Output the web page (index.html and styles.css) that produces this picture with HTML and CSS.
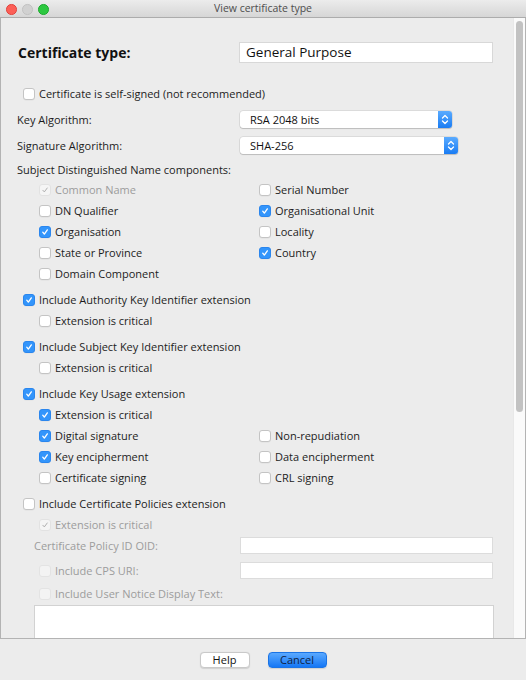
FILE: index.html
```html
<!DOCTYPE html>
<html>
<head>
<meta charset="utf-8">
<title>View certificate type</title>
<link rel="stylesheet" href="styles.css">
</head>
<body>
<div class="window">
  <div class="titlebar">
    <div class="lights">
      <span class="light red"></span>
      <span class="light gray"></span>
      <span class="light green"></span>
    </div>
    <div class="title">View certificate type</div>
  </div>

  <div class="pane">
    <div class="content">
      <div class="header-row">
        <div class="heading">Certificate type:</div>
        <div class="textfield big">General Purpose</div>
      </div>

      <div class="cbrow top gap-self">
        <span class="box"></span><span>Certificate is self-signed (not recommended)</span>
      </div>

      <div class="frow gap5">
        <div class="flabel">Key Algorithm:</div>
        <div class="select w212">
          <span class="select-text">RSA 2048 bits</span>
          <span class="stepper"><svg width="14" height="17" viewBox="0 0 14 17"><path d="M4.5 7 L7 4.5 L9.5 7 M4.5 10 L7 12.5 L9.5 10" fill="none" stroke="#fff" stroke-width="1.3" stroke-linecap="round" stroke-linejoin="round"/></svg></span>
        </div>
      </div>

      <div class="frow gap5">
        <div class="flabel">Signature Algorithm:</div>
        <div class="select w218">
          <span class="select-text">SHA-256</span>
          <span class="stepper"><svg width="14" height="17" viewBox="0 0 14 17"><path d="M4.5 7 L7 4.5 L9.5 7 M4.5 10 L7 12.5 L9.5 10" fill="none" stroke="#fff" stroke-width="1.3" stroke-linecap="round" stroke-linejoin="round"/></svg></span>
        </div>
      </div>

      <div class="sublabel">Subject Distinguished Name components:</div>

      <div class="cbgrid">
        <div class="cbrow disabled"><span class="box dis-checked"><svg width="12" height="12" viewBox="0 0 12 12"><path d="M3.4 6.3 L5.2 8.3 L8.7 3.6" fill="none" stroke="#a9a9a9" stroke-width="1.1" stroke-linecap="round" stroke-linejoin="round"/></svg></span><span>Common Name</span></div>
        <div class="cbrow"><span class="box"></span><span>Serial Number</span></div>
        <div class="cbrow"><span class="box"></span><span>DN Qualifier</span></div>
        <div class="cbrow"><span class="box checked"><svg width="12" height="12" viewBox="0 0 12 12"><path d="M3.3 6.2 L5.2 8.5 L8.8 3.4" fill="none" stroke="#fff" stroke-width="1.6" stroke-linecap="round" stroke-linejoin="round"/></svg></span><span>Organisational Unit</span></div>
        <div class="cbrow"><span class="box checked"><svg width="12" height="12" viewBox="0 0 12 12"><path d="M3.3 6.2 L5.2 8.5 L8.8 3.4" fill="none" stroke="#fff" stroke-width="1.6" stroke-linecap="round" stroke-linejoin="round"/></svg></span><span>Organisation</span></div>
        <div class="cbrow"><span class="box"></span><span>Locality</span></div>
        <div class="cbrow"><span class="box"></span><span>State or Province</span></div>
        <div class="cbrow"><span class="box checked"><svg width="12" height="12" viewBox="0 0 12 12"><path d="M3.3 6.2 L5.2 8.5 L8.8 3.4" fill="none" stroke="#fff" stroke-width="1.6" stroke-linecap="round" stroke-linejoin="round"/></svg></span><span>Country</span></div>
        <div class="cbrow"><span class="box"></span><span>Domain Component</span></div>
      </div>

      <div class="cbrow top gap5">
        <span class="box checked"><svg width="12" height="12" viewBox="0 0 12 12"><path d="M3.3 6.2 L5.2 8.5 L8.8 3.4" fill="none" stroke="#fff" stroke-width="1.6" stroke-linecap="round" stroke-linejoin="round"/></svg></span><span>Include Authority Key Identifier extension</span>
      </div>
      <div class="cbrow sub"><span class="box"></span><span>Extension is critical</span></div>

      <div class="cbrow top gap5">
        <span class="box checked"><svg width="12" height="12" viewBox="0 0 12 12"><path d="M3.3 6.2 L5.2 8.5 L8.8 3.4" fill="none" stroke="#fff" stroke-width="1.6" stroke-linecap="round" stroke-linejoin="round"/></svg></span><span>Include Subject Key Identifier extension</span>
      </div>
      <div class="cbrow sub"><span class="box"></span><span>Extension is critical</span></div>

      <div class="cbrow top gap5">
        <span class="box checked"><svg width="12" height="12" viewBox="0 0 12 12"><path d="M3.3 6.2 L5.2 8.5 L8.8 3.4" fill="none" stroke="#fff" stroke-width="1.6" stroke-linecap="round" stroke-linejoin="round"/></svg></span><span>Include Key Usage extension</span>
      </div>
      <div class="cbrow sub"><span class="box checked"><svg width="12" height="12" viewBox="0 0 12 12"><path d="M3.3 6.2 L5.2 8.5 L8.8 3.4" fill="none" stroke="#fff" stroke-width="1.6" stroke-linecap="round" stroke-linejoin="round"/></svg></span><span>Extension is critical</span></div>
      <div class="cbgrid">
        <div class="cbrow"><span class="box checked"><svg width="12" height="12" viewBox="0 0 12 12"><path d="M3.3 6.2 L5.2 8.5 L8.8 3.4" fill="none" stroke="#fff" stroke-width="1.6" stroke-linecap="round" stroke-linejoin="round"/></svg></span><span>Digital signature</span></div>
        <div class="cbrow"><span class="box"></span><span>Non-repudiation</span></div>
        <div class="cbrow"><span class="box checked"><svg width="12" height="12" viewBox="0 0 12 12"><path d="M3.3 6.2 L5.2 8.5 L8.8 3.4" fill="none" stroke="#fff" stroke-width="1.6" stroke-linecap="round" stroke-linejoin="round"/></svg></span><span>Key encipherment</span></div>
        <div class="cbrow"><span class="box"></span><span>Data encipherment</span></div>
        <div class="cbrow"><span class="box"></span><span>Certificate signing</span></div>
        <div class="cbrow"><span class="box"></span><span>CRL signing</span></div>
      </div>

      <div class="cbrow top gap5">
        <span class="box"></span><span>Include Certificate Policies extension</span>
      </div>
      <div class="cbrow sub disabled"><span class="box dis-checked"><svg width="12" height="12" viewBox="0 0 12 12"><path d="M3.4 6.3 L5.2 8.3 L8.7 3.6" fill="none" stroke="#a9a9a9" stroke-width="1.1" stroke-linecap="round" stroke-linejoin="round"/></svg></span><span>Extension is critical</span></div>

      <div class="prow">
        <div class="plabel">Certificate Policy ID OID:</div>
        <div class="field"></div>
      </div>
      <div class="prow gap4">
        <div class="cbrow sub disabled"><span class="box dis"></span><span>Include CPS URI:</span></div>
        <div class="field"></div>
      </div>
      <div class="cbrow sub disabled gap2"><span class="box dis"></span><span>Include User Notice Display Text:</span></div>
      <div class="textarea"></div>
    </div>
    <div class="scrollbar"><div class="thumb"></div></div>
  </div>

  <div class="footer">
    <button class="btn">Help</button>
    <button class="btn primary">Cancel</button>
  </div>
</div>
</body>
</html>
```

FILE: styles.css
```css
* { box-sizing: border-box; }

html, body {
  margin: 0;
  padding: 0;
  background: #ececec;
}

body {
  font-family: "Open Sans", "DejaVu Sans", sans-serif;
  font-size: 11px;
  color: #1c1c1c;
}

.window {
  width: 526px;
  height: 680px;
  display: flex;
  flex-direction: column;
  background: #ececec;
  overflow: hidden;
}

/* title bar */
.titlebar {
  height: 18px;
  flex: none;
  position: relative;
  background: linear-gradient(#ececec, #d6d6d6);
  border-bottom: 1px solid #acacac;
  display: flex;
  align-items: center;
  justify-content: center;
}

.lights {
  position: absolute;
  left: 6px;
  top: 4px;
  display: flex;
  gap: 5.5px;
}

.light {
  width: 10.5px;
  height: 10.5px;
  border-radius: 50%;
  display: block;
}
.light.red { background: #fc5f57; border: 0.5px solid #e0443e; }
.light.gray { background: #d1d1d1; border: 0.5px solid #c2c2c2; }
.light.green { background: #2cc840; border: 0.5px solid #1eaa30; }

.title {
  font-size: 10.5px;
  color: #4d4d4d;
  line-height: 17px;
}

/* scroll pane */
.pane {
  height: 621px;
  flex: none;
  display: flex;
  border-left: 1px solid #b3b3b3;
  border-right: 1px solid #b3b3b3;
  border-bottom: 1px solid #b3b3b3;
}

.content {
  flex: 1;
  overflow: hidden;
  padding: 24px 0 0 16px;
}

.scrollbar {
  width: 12px;
  flex: none;
  background: #fafafa;
  border-left: 1px solid #e8e8e8;
  padding: 3px 0 0 2px;
}

.thumb {
  width: 7px;
  height: 391px;
  border-radius: 4px;
  background: #c2c2c2;
}

/* header */
.header-row {
  display: flex;
  align-items: center;
  height: 20px;
}

.heading {
  width: 222px;
  padding-left: 1px;
  font-size: 14px;
  font-weight: bold;
  color: #111;
}

.textfield.big {
  width: 254px;
  height: 21px;
  background: #fff;
  border: 1px solid #d8d8d8;
  font-size: 13.5px;
  line-height: 19px;
  padding-left: 6px;
  color: #111;
}

/* rows */
.cbrow {
  height: 21px;
  display: flex;
  align-items: center;
  gap: 4px;
  white-space: nowrap;
}

.cbrow.top { padding-left: 6px; }
.cbrow.sub { padding-left: 22px; }
.cbrow.disabled { color: #9c9c9c; }

.gap-self { margin-top: 21px; }
.gap5 { margin-top: 5px; }
.gap4 { margin-top: 4px; }
.gap2 { margin-top: 2px; }

.box {
  width: 12px;
  height: 12px;
  flex: none;
  border-radius: 3px;
  background: #fff;
  border: 1px solid #c4c4c4;
  box-shadow: 0 0.5px 0.5px rgba(0,0,0,0.06);
  display: flex;
  align-items: center;
  justify-content: center;
}

.box svg { display: block; }

.box.checked {
  background: #3395fb;
  border-color: #2a86ee;
}

.box.dis-checked {
  background: #f5f5f5;
  border-color: #e2e2e2;
  box-shadow: none;
}

.box.dis {
  background: #f3f3f3;
  border-color: #e3e3e3;
  box-shadow: none;
}

.frow {
  height: 21px;
  display: flex;
  align-items: center;
}

.flabel { width: 223px; }

.select {
  height: 17px;
  display: flex;
  align-items: center;
  background: #fff;
  border-radius: 3px;
  box-shadow: 0 0 0 0.5px rgba(0,0,0,0.14), 0 1px 1px rgba(0,0,0,0.14);
}

.select.w212 { width: 212px; }
.select.w218 { width: 218px; }

.select-text {
  flex: 1;
  padding-left: 10px;
  color: #111;
}

.stepper {
  width: 14px;
  height: 17px;
  border-radius: 0 3px 3px 0;
  background: linear-gradient(#5aabff, #1a7cf3);
  display: block;
}
.stepper svg { display: block; }

.sublabel {
  height: 18px;
  line-height: 18px;
  margin-top: 5px;
}

.cbgrid {
  display: grid;
  grid-template-columns: 220px auto;
  padding-left: 22px;
}

/* policies */
.prow {
  display: grid;
  grid-template-columns: 223px 253px;
  align-items: center;
  height: 21px;
}

.plabel {
  padding-left: 17px;
  color: #9c9c9c;
}

.field {
  height: 17px;
  background: #fff;
  border: 1px solid #dcdcdc;
}

.textarea {
  margin: 1px 0 0 17px;
  width: 460px;
  height: 60px;
  background: #fff;
  border: 1px solid #d2d2d2;
}

/* footer */
.footer {
  flex: 1;
  display: flex;
  justify-content: center;
  align-items: flex-start;
  gap: 18px;
  padding-top: 13px;
}

.btn {
  height: 16px;
  padding: 0;
  font-family: "Open Sans", "DejaVu Sans", sans-serif;
  font-size: 11px;
  line-height: 14px;
  color: #111;
  background: #fff;
  border: 1px solid #c9c9c9;
  border-radius: 4px;
  box-shadow: 0 0.5px 1px rgba(0,0,0,0.12);
  width: 50px;
}

.btn.primary {
  width: 59px;
  background: linear-gradient(#5aa9ff, #1577f5);
  border-color: #1a74e6;
  color: #0f1f44;
}
```
